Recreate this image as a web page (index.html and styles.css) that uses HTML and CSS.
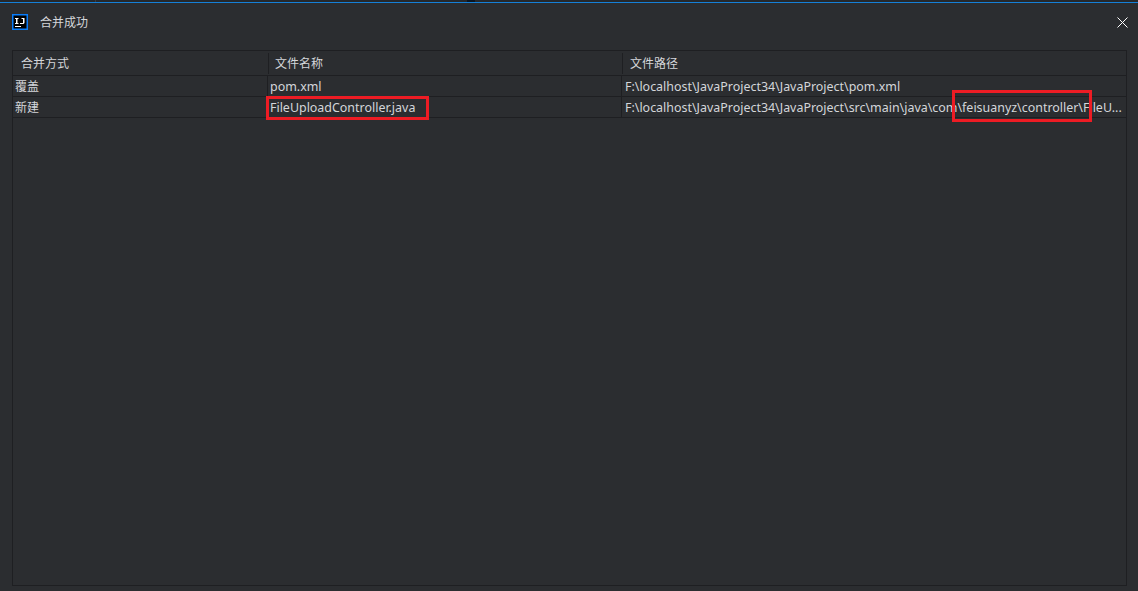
FILE: index.html
```html
<!DOCTYPE html>
<html lang="zh">
<head>
<meta charset="utf-8">
<title>合并成功</title>
<link rel="stylesheet" href="styles.css">
</head>
<body>
<div class="topstrip"><span class="tick"></span><span class="notch"></span></div>
<div class="topline"></div>
<header class="titlebar">
  <svg class="logo" width="16" height="16" viewBox="0 0 16 16">
    <rect x="0.750" y="0.750" width="14.500" height="14.500" fill="#000" stroke="#087cfa" stroke-width="1.500"/>
    <path d="M3 4h3.500v1H5.500v4h1v1H3V9h1V5H3z" fill="#fff"/>
    <path d="M9.500 4h3v5l-1 1H8V9h3V5H9.500z" fill="#fff"/>
    <rect x="3" y="12" width="6" height="1" fill="#fff"/>
  </svg>
  <span class="title">合并成功</span>
  <svg class="close" width="11" height="11" viewBox="0 0 11 11"><path d="M.5.500l10 10M10.500.500l-10 10" stroke="#fff" fill="none"/></svg>
</header>
<main class="panel">
  <div class="row head">
    <div class="cell c1">合并方式</div>
    <div class="cell c2">文件名称</div>
    <div class="cell c3">文件路径</div>
  </div>
  <div class="row">
    <div class="cell c1">覆盖</div>
    <div class="cell c2">pom.xml</div>
    <div class="cell c3">F:\localhost\JavaProject34\JavaProject\pom.xml</div>
  </div>
  <div class="row">
    <div class="cell c1">新建</div>
    <div class="cell c2">FileUploadController.java</div>
    <div class="cell c3">F:\localhost\JavaProject34\JavaProject\src\main\java\com\feisuanyz\controller\FileU...</div>
  </div>
</main>
<div class="mark mark-name"></div>
<div class="mark mark-path"></div>
</body>
</html>
```
FILE: styles.css
```css
* { box-sizing: border-box; }
html, body { margin: 0; height: 100%; }
body {
  position: relative;
  width: 1138px;
  height: 591px;
  overflow: hidden;
  background: #2b2d30;
  color: #d4d6da;
  font: 12.45px/20px "Noto Sans", "Noto Sans CJK SC", sans-serif;
  display: flex;
  flex-direction: column;
}
.topstrip {
  height: 2px;
  flex: none;
  background: #26282b;
  display: flex;
  padding-left: 95px;
}
.tick { width: 1px; background: #3a3d42; }
.notch { width: 8px; margin-left: 371px; background: #0c1520; }
.topline { height: 1px; flex: none; background: #1580d8; }
.titlebar {
  height: 38px;
  flex: none;
  display: flex;
  align-items: center;
  padding: 0 10px 0 12px;
}
.logo { flex: none; }
.title { margin-left: 12px; padding-top: 2px; flex: 1; font-size: 12px; }
.close { flex: none; }
.panel {
  width: 1115px;
  height: 536px;
  margin: 9px 0 0 12px;
  border: 1px solid #1e1f22;
  flex: none;
}
.row {
  display: grid;
  grid-template-columns: 254px 354px 1fr;
  height: 21px;
  border-bottom: 1px solid #1e1f22;
}
.row.head { height: 25px; grid-template-columns: 255px 354px 1fr; }
.cell {
  padding: 1px 0 0 3px;
  border-left: 1px solid #1e1f22;
  white-space: nowrap;
  overflow: hidden;
  line-height: 20px;
}
.cell.c1 { border-left: 0; padding-left: 2px; font-size: 12px; }
.cell.c2 { padding-left: 2px; }
.head .cell { padding: 0 0 0 6px; margin: 2px 0 1px; line-height: 21px; font-size: 12px; }
.head .cell.c1 { padding-left: 8px; }
.head .cell.c3 { padding-left: 7px; }
.mark { position: absolute; border: 3px solid #ed1c24; }
.mark-name { left: 266px; top: 96px; width: 163px; height: 24px; }
.mark-path { left: 952px; top: 90px; width: 140px; height: 32px; }
```
